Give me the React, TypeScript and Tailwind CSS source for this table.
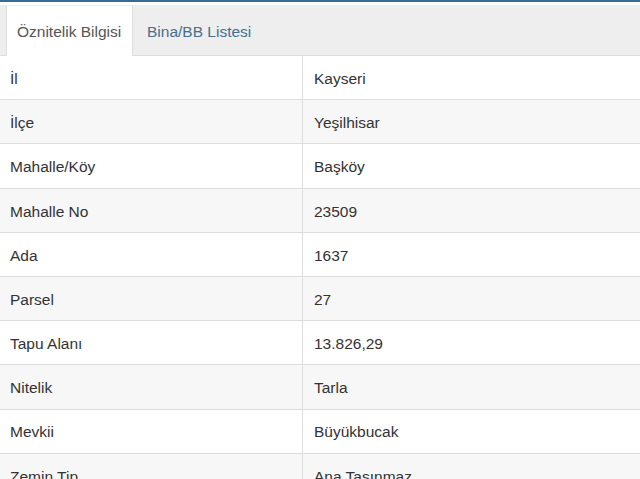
import React from "react";

const rows: [string, string][] = [
  ["İl", "Kayseri"],
  ["İlçe", "Yeşilhisar"],
  ["Mahalle/Köy", "Başköy"],
  ["Mahalle No", "23509"],
  ["Ada", "1637"],
  ["Parsel", "27"],
  ["Tapu Alanı", "13.826,29"],
  ["Nitelik", "Tarla"],
  ["Mevkii", "Büyükbucak"],
  ["Zemin Tip", "Ana Taşınmaz"],
];

export default function App() {
  return (
    <div className="w-[640px] h-[479px] overflow-hidden bg-white text-[15.5px] text-[#333]" style={{ fontFamily: '"Liberation Sans", Arial, sans-serif' }}>
      <div className="h-[2px] bg-[#3a6a96]" />
      <div className="h-[3px] bg-white" />
      <div className="flex h-[51px] bg-[#eeeeee] border-b border-[#dddddd] pl-[6px] pt-[1px]">
        <div className="flex items-center w-[127px] pl-[10px] pt-[2px] bg-white border-x border-[#dddddd] -mb-px text-[#555] text-[15.5px]">
          Öznitelik Bilgisi
        </div>
        <div className="flex items-center pl-[14px] pt-[2px] text-[#46708f] text-[15.5px]">Bina/BB Listesi</div>
      </div>
      <div>
        {rows.map(([k, v], i) => (
          <div key={k} className={`flex h-[44.2px] border-b border-[#dddddd] ${i % 2 === 1 ? "bg-[#f7f7f7]" : "bg-white"}`}>
            <div className="w-[303px] flex items-center pl-[10px] pt-[2px] border-r border-[#dddddd]">{k}</div>
            <div className="flex-1 flex items-center pl-[11px] pt-[2px]">{v}</div>
          </div>
        ))}
      </div>
    </div>
  );
}
